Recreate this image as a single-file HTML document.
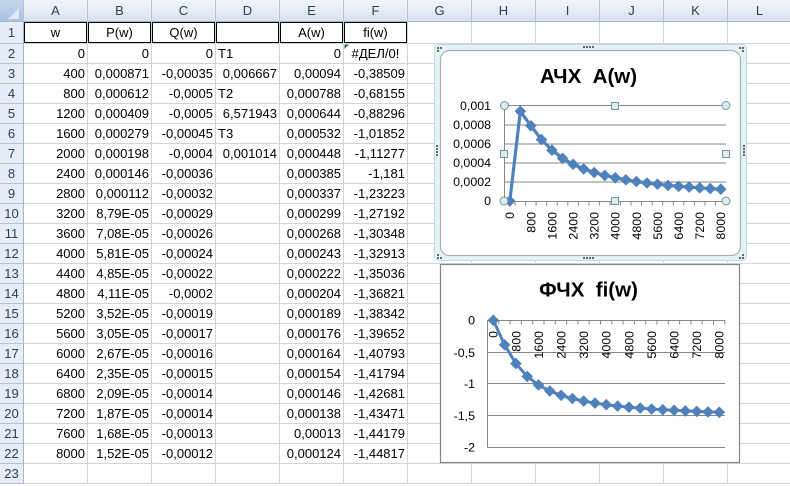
<!DOCTYPE html>
<html><head><meta charset="utf-8">
<style>
html,body{margin:0;padding:0;background:#fff;width:790px;height:486px;overflow:hidden}
body{position:relative;font:13px "Liberation Sans","Noto Sans CJK SC",sans-serif;color:#000}
table{position:absolute;left:0;top:0;border-collapse:separate;border-spacing:0;table-layout:fixed;width:792px}
td,th{box-sizing:border-box;height:20px;padding:0 2px 0 0;border-right:1px solid #cdd5e3;border-bottom:1px solid #cdd5e3;text-align:right;font-weight:normal;white-space:nowrap;overflow:hidden;line-height:19px}
tr.h th{height:22px;background:linear-gradient(#f2f5fa,#e6ecf5 55%,#d6e0ef);border-right:1px solid #b4c3d8;border-bottom:1px solid #9eb6ce;text-align:center;color:#27415f;padding:0}
tr.r1 td{height:22px;text-align:center;padding:0}
th.n{background:#e6edf6;border-right:1px solid #9eb6ce;border-bottom:1px solid #b4c3d8;text-align:center;color:#27415f;padding:0}
td.l{text-align:left;padding-left:2px}
.b{position:absolute;top:22px;height:21px;width:63px;box-sizing:border-box;border:1.5px solid #000}
svg{position:absolute;left:0;top:0}
text{font-family:"Liberation Sans","Noto Sans CJK SC",sans-serif;font-size:12.4px;fill:#000}
text.t{font-size:20.5px;font-weight:bold;white-space:pre;text-anchor:middle}
text.e{text-anchor:end}
</style></head><body>
<table>
<colgroup><col style="width:24px"><col span="12" style="width:64px"></colgroup>
<tr class="h"><th style="background:linear-gradient(#c4d6ec,#a9c3e4)"></th><th>A</th><th>B</th><th>C</th><th>D</th><th>E</th><th>F</th><th>G</th><th>H</th><th>I</th><th>J</th><th>K</th><th>L</th></tr>
<tr class="r1"><th class="n" style="height:22px">1</th><td>w</td><td>P(w)</td><td>Q(w)</td><td></td><td>A(w)</td><td>fi(w)</td><td></td><td></td><td></td><td></td><td></td><td></td></tr>
<tr><th class="n">2</th><td>0</td><td>0</td><td>0</td><td class="l">T1</td><td>0</td><td style="text-align:center;padding:0">#ДЕЛ/0!</td><td></td><td></td><td></td><td></td><td></td><td></td></tr>
<tr><th class="n">3</th><td>400</td><td>0,000871</td><td>-0,00035</td><td>0,006667</td><td>0,00094</td><td>-0,38509</td><td></td><td></td><td></td><td></td><td></td><td></td></tr>
<tr><th class="n">4</th><td>800</td><td>0,000612</td><td>-0,0005</td><td class="l">T2</td><td>0,000788</td><td>-0,68155</td><td></td><td></td><td></td><td></td><td></td><td></td></tr>
<tr><th class="n">5</th><td>1200</td><td>0,000409</td><td>-0,0005</td><td>6,571943</td><td>0,000644</td><td>-0,88296</td><td></td><td></td><td></td><td></td><td></td><td></td></tr>
<tr><th class="n">6</th><td>1600</td><td>0,000279</td><td>-0,00045</td><td class="l">T3</td><td>0,000532</td><td>-1,01852</td><td></td><td></td><td></td><td></td><td></td><td></td></tr>
<tr><th class="n">7</th><td>2000</td><td>0,000198</td><td>-0,0004</td><td>0,001014</td><td>0,000448</td><td>-1,11277</td><td></td><td></td><td></td><td></td><td></td><td></td></tr>
<tr><th class="n">8</th><td>2400</td><td>0,000146</td><td>-0,00036</td><td></td><td>0,000385</td><td>-1,181</td><td></td><td></td><td></td><td></td><td></td><td></td></tr>
<tr><th class="n">9</th><td>2800</td><td>0,000112</td><td>-0,00032</td><td></td><td>0,000337</td><td>-1,23223</td><td></td><td></td><td></td><td></td><td></td><td></td></tr>
<tr><th class="n">10</th><td>3200</td><td>8,79E-05</td><td>-0,00029</td><td></td><td>0,000299</td><td>-1,27192</td><td></td><td></td><td></td><td></td><td></td><td></td></tr>
<tr><th class="n">11</th><td>3600</td><td>7,08E-05</td><td>-0,00026</td><td></td><td>0,000268</td><td>-1,30348</td><td></td><td></td><td></td><td></td><td></td><td></td></tr>
<tr><th class="n">12</th><td>4000</td><td>5,81E-05</td><td>-0,00024</td><td></td><td>0,000243</td><td>-1,32913</td><td></td><td></td><td></td><td></td><td></td><td></td></tr>
<tr><th class="n">13</th><td>4400</td><td>4,85E-05</td><td>-0,00022</td><td></td><td>0,000222</td><td>-1,35036</td><td></td><td></td><td></td><td></td><td></td><td></td></tr>
<tr><th class="n">14</th><td>4800</td><td>4,11E-05</td><td>-0,0002</td><td></td><td>0,000204</td><td>-1,36821</td><td></td><td></td><td></td><td></td><td></td><td></td></tr>
<tr><th class="n">15</th><td>5200</td><td>3,52E-05</td><td>-0,00019</td><td></td><td>0,000189</td><td>-1,38342</td><td></td><td></td><td></td><td></td><td></td><td></td></tr>
<tr><th class="n">16</th><td>5600</td><td>3,05E-05</td><td>-0,00017</td><td></td><td>0,000176</td><td>-1,39652</td><td></td><td></td><td></td><td></td><td></td><td></td></tr>
<tr><th class="n">17</th><td>6000</td><td>2,67E-05</td><td>-0,00016</td><td></td><td>0,000164</td><td>-1,40793</td><td></td><td></td><td></td><td></td><td></td><td></td></tr>
<tr><th class="n">18</th><td>6400</td><td>2,35E-05</td><td>-0,00015</td><td></td><td>0,000154</td><td>-1,41794</td><td></td><td></td><td></td><td></td><td></td><td></td></tr>
<tr><th class="n">19</th><td>6800</td><td>2,09E-05</td><td>-0,00014</td><td></td><td>0,000146</td><td>-1,42681</td><td></td><td></td><td></td><td></td><td></td><td></td></tr>
<tr><th class="n">20</th><td>7200</td><td>1,87E-05</td><td>-0,00014</td><td></td><td>0,000138</td><td>-1,43471</td><td></td><td></td><td></td><td></td><td></td><td></td></tr>
<tr><th class="n">21</th><td>7600</td><td>1,68E-05</td><td>-0,00013</td><td></td><td>0,00013</td><td>-1,44179</td><td></td><td></td><td></td><td></td><td></td><td></td></tr>
<tr><th class="n">22</th><td>8000</td><td>1,52E-05</td><td>-0,00012</td><td></td><td>0,000124</td><td>-1,44817</td><td></td><td></td><td></td><td></td><td></td><td></td></tr>
<tr><th class="n">23</th><td></td><td></td><td></td><td></td><td></td><td></td><td></td><td></td><td></td><td></td><td></td><td></td></tr>
</table>
<div class="b" style="left:24px"></div><div class="b" style="left:88px"></div><div class="b" style="left:152px"></div><div class="b" style="left:216px"></div><div class="b" style="left:280px"></div><div class="b" style="left:344px"></div>
<svg width="790" height="486" viewBox="0 0 790 486">
<defs>
<marker id="d" markerUnits="userSpaceOnUse" markerWidth="14" markerHeight="14" refX="7" refY="7" overflow="visible"><path d="M7 1.2L12.8 7L7 12.8L1.2 7Z" fill="#4f81bd"/></marker>
</defs>
<path d="M8 19L19 19L19 8Z" fill="#dfe9f5" stroke="none"/>
<path d="M344.5 44.5h4.5l-4.5 4.5z" fill="#1e7b34"/>

<!-- chart 1 frame -->
<rect x="434.5" y="44.5" width="312" height="216" rx="4" fill="#e4f4f6" stroke="#c6d9db"/>
<rect x="440.5" y="50.5" width="300" height="205" rx="9" fill="#fff" stroke="#aab1b3" stroke-width="1.2"/>
<g fill="#5f6a6d">
<rect x="437" y="47" width="2" height="2"/><rect x="440" y="47" width="2" height="2"/><rect x="437" y="50" width="2" height="2"/>
<rect x="739" y="47" width="2" height="2"/><rect x="742" y="47" width="2" height="2"/><rect x="742" y="50" width="2" height="2"/>
<rect x="437" y="254" width="2" height="2"/><rect x="437" y="257" width="2" height="2"/><rect x="440" y="257" width="2" height="2"/>
<rect x="742" y="254" width="2" height="2"/><rect x="739" y="257" width="2" height="2"/><rect x="742" y="257" width="2" height="2"/>
<rect x="583" y="46" width="2" height="2"/><rect x="586" y="46" width="2" height="2"/><rect x="589" y="46" width="2" height="2"/><rect x="592" y="46" width="2" height="2"/>
<rect x="583" y="257" width="2" height="2"/><rect x="586" y="257" width="2" height="2"/><rect x="589" y="257" width="2" height="2"/><rect x="592" y="257" width="2" height="2"/>
<rect x="436" y="145" width="2" height="2"/><rect x="436" y="148" width="2" height="2"/><rect x="436" y="151" width="2" height="2"/><rect x="436" y="154" width="2" height="2"/>
<rect x="743" y="145" width="2" height="2"/><rect x="743" y="148" width="2" height="2"/><rect x="743" y="151" width="2" height="2"/><rect x="743" y="154" width="2" height="2"/>
</g>
<text class="t" x="588.5" y="83">АЧХ  A(w)</text>
<g stroke="#868686" stroke-width="1" fill="none">
<path d="M504.5 105.5H726M504.5 125H726M504.5 144H726M504.5 163H726M504.5 182H726"/>
<path d="M504.5 105.5V201.5H726"/>
<path d="M504.5 201.5v4M515 201.5v4M525.6 201.5v4M536.1 201.5v4M546.7 201.5v4M557.2 201.5v4M567.8 201.5v4M578.3 201.5v4M588.9 201.5v4M599.4 201.5v4M610 201.5v4M620.5 201.5v4M631.1 201.5v4M641.6 201.5v4M652.2 201.5v4M662.7 201.5v4M673.3 201.5v4M683.8 201.5v4M694.4 201.5v4M704.9 201.5v4M715.5 201.5v4M726 201.5v4"/>
</g>
<g>
<text class="e" x="491" y="110">0,001</text>
<text class="e" x="491" y="129">0,0008</text>
<text class="e" x="491" y="148">0,0006</text>
<text class="e" x="491" y="167">0,0004</text>
<text class="e" x="491" y="186">0,0002</text>
<text class="e" x="491" y="205">0</text>
</g>
<g>
<text class="e" transform="translate(514.2,212) rotate(-90)">0</text>
<text class="e" transform="translate(535.3,212) rotate(-90)">800</text>
<text class="e" transform="translate(556.4,212) rotate(-90)">1600</text>
<text class="e" transform="translate(577.5,212) rotate(-90)">2400</text>
<text class="e" transform="translate(598.6,212) rotate(-90)">3200</text>
<text class="e" transform="translate(619.7,212) rotate(-90)">4000</text>
<text class="e" transform="translate(640.8,212) rotate(-90)">4800</text>
<text class="e" transform="translate(661.9,212) rotate(-90)">5600</text>
<text class="e" transform="translate(683,212) rotate(-90)">6400</text>
<text class="e" transform="translate(704.1,212) rotate(-90)">7200</text>
<text class="e" transform="translate(725.2,212) rotate(-90)">8000</text>
</g>
<polyline fill="none" stroke="#4f81bd" stroke-width="3.2" stroke-linejoin="round" marker-start="url(#d)" marker-mid="url(#d)" marker-end="url(#d)" points="509.8,201 520.35,111.3 530.9,125.8 541.45,139.6 552,150.2 562.55,158.3 573.1,164.3 583.65,168.9 594.2,172.5 604.75,175.4 615.3,177.8 625.85,179.8 636.4,181.5 646.95,183 657.5,184.2 668.05,185.4 678.6,186.3 689.15,187.1 699.7,187.8 710.25,188.6 720.8,189.2"/>
<g fill="#d6edf2" stroke="#7f9298" stroke-width="1">
<circle cx="504.5" cy="105.5" r="4"/><circle cx="726" cy="105.5" r="4"/><circle cx="504" cy="201" r="4"/><circle cx="726" cy="201" r="4"/>
<rect x="611.5" y="102.5" width="7" height="7"/><rect x="611.5" y="197.5" width="7" height="7"/><rect x="500.5" y="150.5" width="7" height="7"/><rect x="722.5" y="150.5" width="7" height="7"/>
</g>

<!-- chart 2 -->
<rect x="440.5" y="264.5" width="299" height="198" fill="#fff" stroke="#868686" stroke-width="1.2"/>
<text class="t" x="588.5" y="296.5">ФЧХ  fi(w)</text>
<g stroke="#868686" stroke-width="1" fill="none">
<path d="M487.5 352.5H725M487.5 383.5H725M487.5 415.5H725M487.5 447.5H725"/>
<path d="M725 320.5H487.5V447.5"/>
<path d="M487.5 320.5v4M498.8 320.5v4M510.1 320.5v4M521.4 320.5v4M532.7 320.5v4M544 320.5v4M555.3 320.5v4M566.6 320.5v4M577.9 320.5v4M589.2 320.5v4M600.5 320.5v4M611.8 320.5v4M623.1 320.5v4M634.4 320.5v4M645.7 320.5v4M657 320.5v4M668.3 320.5v4M679.6 320.5v4M690.9 320.5v4M702.2 320.5v4M713.5 320.5v4M724.8 320.5v4"/>
</g>
<g>
<text class="e" x="475" y="324.5">0</text>
<text class="e" x="475" y="357">-0,5</text>
<text class="e" x="475" y="388">-1</text>
<text class="e" x="475" y="420">-1,5</text>
<text class="e" x="475" y="451.5">-2</text>
</g>
<g>
<text class="e" transform="translate(497.7,331) rotate(-90)">0</text>
<text class="e" transform="translate(520.3,331) rotate(-90)">800</text>
<text class="e" transform="translate(542.9,331) rotate(-90)">1600</text>
<text class="e" transform="translate(565.5,331) rotate(-90)">2400</text>
<text class="e" transform="translate(588.1,331) rotate(-90)">3200</text>
<text class="e" transform="translate(610.7,331) rotate(-90)">4000</text>
<text class="e" transform="translate(633.3,331) rotate(-90)">4800</text>
<text class="e" transform="translate(655.9,331) rotate(-90)">5600</text>
<text class="e" transform="translate(678.5,331) rotate(-90)">6400</text>
<text class="e" transform="translate(701.1,331) rotate(-90)">7200</text>
<text class="e" transform="translate(723.7,331) rotate(-90)">8000</text>
</g>
<polyline fill="none" stroke="#4f81bd" stroke-width="3" stroke-linejoin="round" marker-start="url(#d)" marker-mid="url(#d)" marker-end="url(#d)" points="493.3,320.3 504.6,344.8 515.9,363.6 527.2,376.4 538.5,385 549.8,391 561.1,395.3 572.4,398.5 583.7,401.1 595,403.1 606.3,404.7 617.6,406.1 628.9,407.2 640.2,408.1 651.5,409 662.8,409.7 674.1,410.3 685.4,410.9 696.7,411.4 708,411.9 719.3,412.3"/>
</svg>
</body></html>
